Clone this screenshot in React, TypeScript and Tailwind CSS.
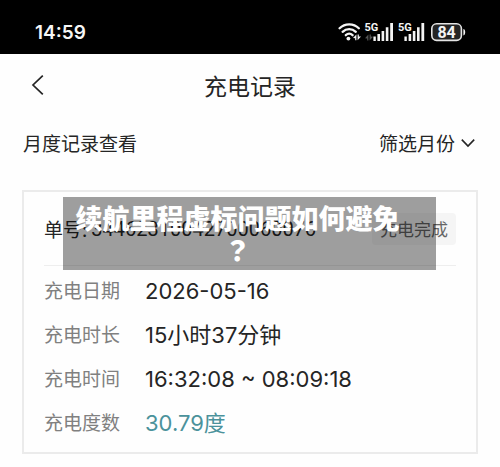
const cjk = 'font-["Noto_Sans_CJK_SC",sans-serif]';
const mixed = 'font-["Inter","Noto_Sans_CJK_SC",sans-serif]';

function StatusIcons() {
  return (
    <svg className="h-6 w-[130px]" viewBox="0 0 130 24" fill="none" aria-label="Wi-Fi, 5G, 5G, 84%">
      <g stroke="#f4f4f4" strokeWidth="2.3" strokeLinecap="round">
        <path d="M1.6 8.2c5.2-5.2 14-5.2 19.2 0" />
        <path d="M4.6 11.8c3.8-3.6 9.4-3.6 13.2 0" />
        <path d="M7.8 15.2c2-1.9 4.8-1.9 6.8 0" />
      </g>
      <circle cx="10.4" cy="18.6" r="1.9" fill="#f4f4f4" />
      <path d="M18.4 14.4v5.8h-1.2v-2l-2.2-.2zM19.6 20.2v-5.8h1.2v2l2.2.2z" fill="#f4f4f4" />
      <path d="M30.4 14.6v5.8h-1.2v-2l-2.2-.2zM31.6 20.4v-5.8h1.2v2l2.2.2z" fill="#555555" />
      <g fill="#f4f4f4">
        <path d="M35.4 16.6h2.4V21h-2.4zM39.4 14h2.6v7h-2.6zM43.6 11h2.6v10h-2.6zM47.8 7.2h2.6V21h-2.6zM52.2 3H55v18h-2.8z" />
        <path d="M66.4 16.6h2.4V21h-2.4zM70.6 14h2.6v7h-2.6zM74.8 11h2.6v10h-2.6zM79 7.2h2.6V21H79zM83.4 3h2.8v18h-2.8z" />
        <path d="M125.4 9c2.4 0 2.4 6.4 0 6.4z" />
      </g>
      <rect x="93.8" y="3.8" width="29.6" height="16.6" rx="4.8" fill="#242424" stroke="#e4e4e4" strokeWidth="1.6" />
      <g fill="#f4f4f4" className='font-["Roboto",sans-serif]'>
        <text x="26.4" y="11.4" fontSize="11" className="font-bold">5G</text>
        <text x="60" y="11.4" fontSize="11" className="font-bold">5G</text>
        <text x="108.6" y="17.8" fontSize="16" textAnchor="middle" className="font-bold">84</text>
      </g>
    </svg>
  );
}

const rows = [
  { label: "充电日期", value: "2026-05-16" },
  { label: "充电时长", value: "15小时37分钟" },
  { label: "充电时间", value: "16:32:08 ~ 08:09:18" },
  { label: "充电度数", value: "30.79度", accent: true },
];

export default function App() {
  return (
    <div className={`min-h-screen bg-[#fefefe] text-[#252525] ${cjk}`}>
      <div className="flex h-[54px] items-center justify-between bg-black pt-2.5 pr-8 pl-[35px]">
        <time className={`pt-0.5 text-[19px] leading-6 font-semibold text-[#f6f6f6] ${mixed}`}>14:59</time>
        <StatusIcons />
      </div>

      <header className="grid h-[62px] grid-cols-[1fr_auto_1fr] items-center px-7">
        <button type="button" aria-label="返回" className="w-5">
          <svg className="h-5 w-5" viewBox="0 0 20 20" fill="none" stroke="#252525" strokeWidth="1.7">
            <path d="M14.8 .6 5 10l9.8 9.4" />
          </svg>
        </button>
        <h1 className="text-[23px] leading-8">充电记录</h1>
      </header>

      <div className="flex h-[54px] items-center justify-between pr-[25px] pl-[23px] text-[19px] leading-7">
        <h2>月度记录查看</h2>
        <button type="button" className="flex items-center gap-1.5">
          筛选月份
          <svg className="h-4 w-3.5" viewBox="0 0 14 16" fill="none" stroke="#252525" strokeWidth="1.6">
            <path d="m.8 4.6 6.2 6.4 6.2-6.4" />
          </svg>
        </button>
      </div>

      <main className="px-[22px] pt-5 pb-3">
        <article className="relative border-2 border-[#ebebeb] px-5 pb-2">
          <div className="flex h-[74px] items-center justify-between border-b border-[#eeeeee]">
            <p className="flex items-center gap-1 text-[19px] leading-7">
              单号: <span className='font-["Roboto",sans-serif] text-[20px]'>34462310042700060076</span>
            </p>
            <span className="rounded bg-[#f5f5f5] px-2 py-0.5 text-[17px] leading-7 text-[#666666]">充电完成</span>
          </div>
          <dl className="pt-0.5">
            {rows.map((row) => (
              <div key={row.label} className="flex h-11 items-center">
                <dt className="w-[101px] text-[19px] leading-7 text-[#808080]">{row.label}</dt>
                <dd className={`pt-0.5 text-[22px] leading-8 ${mixed} ${row.accent ? "text-[#4b929b]" : ""}`}>{row.value}</dd>
              </div>
            ))}
          </dl>
          <p className="absolute top-[5px] right-10 left-[39px] bg-black/[0.375] pt-[5px] pr-6 pb-1 text-center text-[27px] leading-8 font-black text-white [line-break:anywhere]">
            续航里程虚标问题如何避免<span className='font-["Noto_Sans_CJK_TC",sans-serif]'>？</span>
          </p>
        </article>
      </main>
    </div>
  );
}
